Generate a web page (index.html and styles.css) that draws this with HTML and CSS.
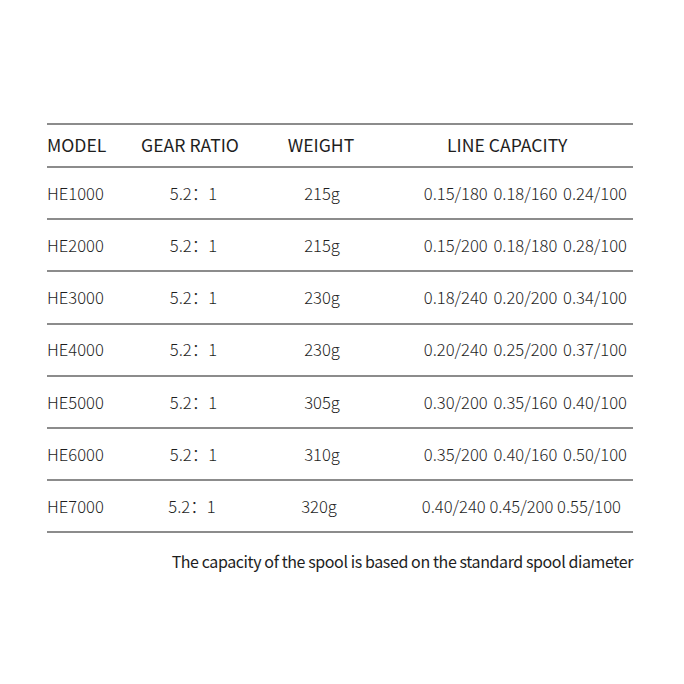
FILE: index.html
```html
<!DOCTYPE html>
<html>
<head>
<meta charset="utf-8">
<link rel="stylesheet" href="styles.css">
</head>
<body>
<div class="sheet">
  <div class="table">
    <div class="row head">
      <div class="c1">MODEL</div>
      <div class="c2">GEAR RATIO</div>
      <div class="c3">WEIGHT</div>
      <div class="c4">LINE CAPACITY</div>
    </div>
    <div class="row">
      <div class="c1">HE1000</div>
      <div class="c2">5.2：1</div>
      <div class="c3">215g</div>
      <div class="c4">0.15/180 0.18/160 0.24/100</div>
    </div>
    <div class="row">
      <div class="c1">HE2000</div>
      <div class="c2">5.2：1</div>
      <div class="c3">215g</div>
      <div class="c4">0.15/200 0.18/180 0.28/100</div>
    </div>
    <div class="row">
      <div class="c1">HE3000</div>
      <div class="c2">5.2：1</div>
      <div class="c3">230g</div>
      <div class="c4">0.18/240 0.20/200 0.34/100</div>
    </div>
    <div class="row">
      <div class="c1">HE4000</div>
      <div class="c2">5.2：1</div>
      <div class="c3">230g</div>
      <div class="c4">0.20/240 0.25/200 0.37/100</div>
    </div>
    <div class="row">
      <div class="c1">HE5000</div>
      <div class="c2">5.2：1</div>
      <div class="c3">305g</div>
      <div class="c4">0.30/200 0.35/160 0.40/100</div>
    </div>
    <div class="row">
      <div class="c1">HE6000</div>
      <div class="c2">5.2：1</div>
      <div class="c3">310g</div>
      <div class="c4">0.35/200 0.40/160 0.50/100</div>
    </div>
    <div class="row last">
      <div class="c1">HE7000</div>
      <div class="c2 shift">5.2：1</div>
      <div class="c3 shift">320g</div>
      <div class="c4 shift">0.40/240 0.45/200 0.55/100</div>
    </div>
  </div>
  <p class="note">The capacity of the spool is based on the standard spool diameter</p>
</div>
</body>
</html>
```

FILE: styles.css
```css
html, body {
  margin: 0;
  padding: 0;
  background: #ffffff;
}

body {
  font-family: "Noto Sans CJK SC", "Noto Sans", sans-serif;
  color: #1e1e1e;
}

.sheet {
  width: 586px;
  margin-left: 47px;
  padding-top: 123px;
}

.table {
  border-top: 2px solid #8c8c8c;
}

.row {
  display: grid;
  grid-template-columns: 80px 130px 128px 248px;
  align-items: center;
  height: 50.2px;
  border-bottom: 2px solid #8c8c8c;
  font-size: 16.6px;
  font-weight: 300;
  line-height: 1;
}

.row.head {
  height: 43px;
  box-sizing: border-box;
  padding-bottom: 2px;
  font-size: 17.6px;
  font-weight: 400;
}

.c1 {
  text-align: left;
}

.c2 {
  text-align: center;
  padding-left: 3px;
}

.c3 {
  text-align: center;
  padding-left: 2px;
}

.c4 {
  text-align: right;
  padding-right: 6px;
  word-spacing: 2px;
}

.head .c2 {
  padding-left: 0;
  padding-right: 4px;
}

.head .c3 {
  padding-left: 0;
}

.head .c4 {
  text-align: left;
  padding-left: 62px;
  word-spacing: 0;
}

.shift.c2 {
  padding-left: 0;
}

.shift.c3 {
  padding-left: 0;
  padding-right: 4px;
}

.shift.c4 {
  padding-right: 12px;
  word-spacing: 0;
}

.note {
  margin: 16px 0 0 0;
  text-align: right;
  font-size: 16px;
  font-weight: 400;
  letter-spacing: -0.4px;
  color: #1e1e1e;
}
```
